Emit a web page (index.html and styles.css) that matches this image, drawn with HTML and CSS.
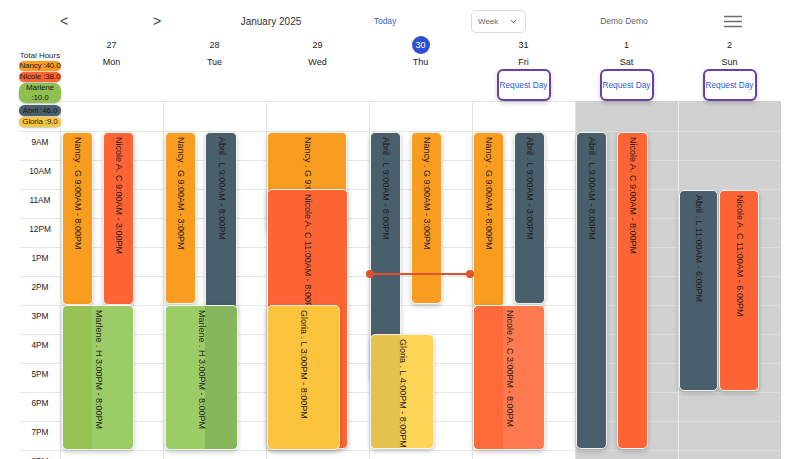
FILE: index.html
```html
<!DOCTYPE html>
<html>
<head>
<meta charset="utf-8">
<link rel="stylesheet" href="styles.css">
</head>
<body>
<div class="app">
  <div class="topbar">
    <span class="nav prev">&lt;</span>
    <span class="nav next">&gt;</span>
    <span class="title">January 2025</span>
    <span class="today">Today</span>
    <span class="select">Week
      <svg class="chev" width="7" height="5" viewBox="0 0 7 5"><polyline points="0.8,1 3.5,3.8 6.2,1" fill="none" stroke="#666" stroke-width="1"/></svg>
    </span>
    <span class="user">Demo Demo</span>
    <span class="burger">
      <svg width="18" height="13" viewBox="0 0 18 13"><g stroke="#6f6f6f" stroke-width="1.5"><line x1="0" y1="1.5" x2="18" y2="1.5"/><line x1="0" y1="6.5" x2="18" y2="6.5"/><line x1="0" y1="11.5" x2="18" y2="11.5"/></g></svg>
    </span>
  </div>

  <div class="head">
    <div class="corner">
      <div class="legend">
        <div class="lt">Total Hours</div>
        <div class="pill nancy">Nancy :40.0</div>
        <div class="pill nicole">Nicole :38.0</div>
        <div class="pill marlene">Marlene<br>:10.0</div>
        <div class="pill abril">Abril :46.0</div>
        <div class="pill gloria">Gloria :9.0</div>
      </div>
    </div>
    <div class="dh"><div class="num">27</div><div class="dname">Mon</div></div>
    <div class="dh"><div class="num">28</div><div class="dname">Tue</div></div>
    <div class="dh"><div class="num">29</div><div class="dname">Wed</div></div>
    <div class="dh"><div class="num current">30</div><div class="dname">Thu</div></div>
    <div class="dh"><div class="num">31</div><div class="dname">Fri</div><div class="req">Request Day</div></div>
    <div class="dh"><div class="num">1</div><div class="dname">Sat</div><div class="req">Request Day</div></div>
    <div class="dh"><div class="num">2</div><div class="dname">Sun</div><div class="req">Request Day</div></div>
  </div>

  <div class="body">
    <div class="times">
      <div class="tl">9AM</div>
      <div class="tl">10AM</div>
      <div class="tl">11AM</div>
      <div class="tl">12PM</div>
      <div class="tl">1PM</div>
      <div class="tl">2PM</div>
      <div class="tl">3PM</div>
      <div class="tl">4PM</div>
      <div class="tl">5PM</div>
      <div class="tl">6PM</div>
      <div class="tl">7PM</div>
      <div class="tl">8PM</div>
    </div>

    <div class="col">
      <div class="ev nancy" style="left:1px;top:31px;width:31px;height:173px"><span>Nancy . G 9:00AM - 8:00PM</span></div>
      <div class="ev nicole" style="left:42px;top:31px;width:31px;height:173px"><span>Nicole A. C 9:00AM - 3:00PM</span></div>
      <div class="ev marlene mar-mon" style="left:1px;top:204px;width:72px;height:145px"><span>Marlene . H 3:00PM - 8:00PM</span></div>
    </div>

    <div class="col">
      <div class="ev nancy" style="left:1px;top:31px;width:31px;height:172px"><span>Nancy . G 9:00AM - 3:00PM</span></div>
      <div class="ev abril" style="left:41px;top:31px;width:32px;height:185px"><span>Abril . L 9:00AM - 8:00PM</span></div>
      <div class="ev marlene mar-tue" style="left:1px;top:204px;width:73px;height:145px"><span>Marlene . H 3:00PM - 8:00PM</span></div>
    </div>

    <div class="col">
      <div class="ev nancy" style="left:0px;top:31px;width:80px;height:100px"><span>Nancy . G 9:00AM - 3:00PM</span></div>
      <div class="ev nicole" style="left:0px;top:88px;width:81px;height:260px"><span>Nicole A. C 11:00AM - 8:00PM</span></div>
      <div class="ev gloria" style="left:0px;top:204px;width:73px;height:145px"><span>Gloria . L 3:00PM - 8:00PM</span></div>
    </div>

    <div class="col">
      <div class="ev abril" style="left:0px;top:31px;width:31px;height:250px"><span>Abril . L 9:00AM - 8:00PM</span></div>
      <div class="ev nancy" style="left:41px;top:31px;width:31px;height:172px"><span>Nancy . G 9:00AM - 3:00PM</span></div>
      <div class="ev gloria glo-thu" style="left:0px;top:233px;width:64px;height:115px"><span>Gloria . L 4:00PM - 8:00PM</span></div>
      <div class="drag" style="left:0px;top:172px;width:100px"></div>
    </div>

    <div class="col">
      <div class="ev nancy" style="left:0px;top:31px;width:31px;height:175px"><span>Nancy . G 9:00AM - 8:00PM</span></div>
      <div class="ev abril" style="left:41px;top:31px;width:31px;height:172px"><span>Abril . L 9:00AM - 3:00PM</span></div>
      <div class="ev nicole nic-fri" style="left:0px;top:204px;width:72px;height:145px"><span>Nicole A. C 3:00PM - 8:00PM</span></div>
    </div>

    <div class="col weekend">
      <div class="ev abril" style="left:0px;top:31px;width:31px;height:317px"><span>Abril . L 9:00AM - 8:00PM</span></div>
      <div class="ev nicole" style="left:41px;top:31px;width:31px;height:317px"><span>Nicole A. C 9:00AM - 8:00PM</span></div>
    </div>

    <div class="col weekend sun">
      <div class="ev abril" style="left:0px;top:89px;width:39px;height:201px"><span>Abril . L 11:00AM - 6:00PM</span></div>
      <div class="ev nicole" style="left:40px;top:89px;width:40px;height:201px"><span>Nicole A. C 11:00AM - 6:00PM</span></div>
    </div>
  </div>
</div>
</body>
</html>
```
FILE: styles.css
```css
html, body {
  margin: 0;
  padding: 0;
  background: #ffffff;
}
body {
  font-family: "Liberation Sans", Arial, sans-serif;
  color: #222;
}
.app {
  width: 800px;
  height: 459px;
  overflow: hidden;
  position: relative;
  background: #fff;
}

/* top bar */
.topbar {
  display: flex;
  align-items: center;
  height: 30px;
  padding-top: 6px;
  padding-left: 54px;
}
.nav {
  width: 20px;
  text-align: center;
  font-size: 14px;
  color: #444;
  line-height: 16px;
}
.next { margin-left: 73px; }
.title {
  width: 110px;
  margin-left: 49px;
  text-align: center;
  font-size: 10px;
  color: #333;
}
.today {
  width: 40px;
  margin-left: 39px;
  text-align: center;
  font-size: 8.5px;
  color: #3564d8;
}
.select {
  box-sizing: border-box;
  width: 55px;
  height: 23px;
  margin-left: 66px;
  border: 1px solid #dcdcdc;
  border-radius: 5px;
  display: flex;
  align-items: center;
  justify-content: space-between;
  padding: 0 8px 0 6px;
  font-size: 8px;
  color: #666;
}
.chev { display: block; }
.user {
  width: 80px;
  margin-left: 58px;
  text-align: center;
  font-size: 8.5px;
  color: #666;
}
.burger {
  margin-left: 60px;
  display: flex;
}

/* day header */
.head {
  display: grid;
  grid-template-columns: 60px repeat(7, 103px);
  height: 65px;
}
.corner {
  position: relative;
  z-index: 5;
}
.legend {
  width: 42px;
  margin: 14px 0 0 19px;
  display: flex;
  flex-direction: column;
  align-items: stretch;
}
.lt {
  font-size: 8px;
  line-height: 11px;
  text-align: center;
  color: #222;
  white-space: nowrap;
}
.pill {
  font-size: 8px;
  letter-spacing: -0.15px;
  line-height: 10px;
  text-align: center;
  white-space: nowrap;
  border-radius: 6px;
  margin-bottom: 1px;
  color: #1a1a1a;
  box-shadow: 0 1px 2px rgba(0,0,0,0.25);
}
.pill.marlene { line-height: 10px; border-radius: 7px; }
.pill.abril { margin-top: 1px; line-height: 11px; }
.pill.nancy { background: #f99d20; }
.pill.nicole { background: #ff6433; }
.pill.marlene { background: #8fc04f; }
.pill.abril { background: #4a5f6c; }
.pill.gloria { background: #fcc53e; }

.dh {
  display: flex;
  flex-direction: column;
  align-items: center;
}
.num {
  width: 18px;
  height: 18px;
  line-height: 18px;
  text-align: center;
  font-size: 9px;
  color: #222;
  border-radius: 50%;
}
.num.current {
  background: #2d4fd3;
  color: #fff;
}
.dname {
  margin-top: 2px;
  font-size: 9px;
  line-height: 12px;
  color: #222;
}
.req {
  box-sizing: border-box;
  margin-top: 1px;
  width: 54px;
  height: 32px;
  border: 2px solid #6a40a6;
  border-radius: 6px;
  background: #fff;
  display: flex;
  align-items: center;
  justify-content: center;
  font-size: 8.3px;
  color: #2e5bd6;
  white-space: nowrap;
  box-shadow: 0 2px 4px rgba(0,0,0,0.2);
  position: relative;
  z-index: 4;
}

/* body */
.body {
  display: grid;
  grid-template-columns: 60px repeat(7, 103px);
  height: 358px;
}
.times {
  padding-top: 30px;
  background-image: repeating-linear-gradient(to bottom, #e6e6e6 0 1px, transparent 1px 29px);
  background-position: 20px 30px;
  background-size: 40px 100%;
  background-repeat: no-repeat;
}
.tl {
  height: 29px;
  box-sizing: border-box;
  padding-top: 6px;
  padding-left: 20px;
  line-height: 10px;
  font-size: 8.3px;
  text-align: center;
  color: #222;
}
.col {
  position: relative;
  border-left: 1px solid #e6e6e6;
  background-image:
    linear-gradient(#e6e6e6, #e6e6e6),
    repeating-linear-gradient(to bottom, #e8e8e8 0 1px, transparent 1px 29px);
  background-position: 0 0, 0 30px;
  background-size: 100% 1px, 100% 100%;
  background-repeat: no-repeat, no-repeat;
}
.col.weekend {
  background-color: #d1d1d1;
  background-image:
    repeating-linear-gradient(to bottom, #dcdcdc 0 1px, transparent 1px 29px);
  background-position: 0 30px;
  background-size: 100% 100%;
  background-repeat: no-repeat;
  border-left-color: #e2e2e2;
}
.col.sun { border-left-color: #ececec; }

.ev {
  position: absolute;
  box-sizing: border-box;
  border: 1.5px solid #f3f3f3;
  border-radius: 5px;
  box-shadow: 0 2px 5px rgba(0,0,0,0.22);
  display: flex;
  justify-content: center;
  padding-top: 3.5px;
  overflow: hidden;
}
.ev span {
  writing-mode: vertical-rl;
  font-size: 9px;
  line-height: 11px;
  color: #1c1c1c;
  white-space: nowrap;
}
.ev.nancy { background: #f99d20; }
.ev.nicole { background: #ff6534; }
.ev.abril { background: #4a5f6c; }
.ev.marlene { background: #9ccc65; }
.ev.gloria { background: #fcc33d; }
.ev.mar-mon { background: linear-gradient(to right, #98c153 0 29px, #9ccc65 29px); }
.ev.mar-tue { background: linear-gradient(to right, #9ccc65 0 39px, #88b65a 39px); }
.ev.glo-thu { background: linear-gradient(to right, #e3c24e 0 29px, #fdd455 29px); }
.ev.nic-fri { background: linear-gradient(to right, #ff6a3a 0 29px, #ff7a4f 29px); }

.drag {
  position: absolute;
  height: 2px;
  background: #e0512d;
  z-index: 3;
}
.drag::before,
.drag::after {
  content: "";
  position: absolute;
  top: -3px;
  width: 8px;
  height: 8px;
  border-radius: 50%;
  background: #e0512d;
}
.drag::before { left: -4px; }
.drag::after { right: -4px; }
```
